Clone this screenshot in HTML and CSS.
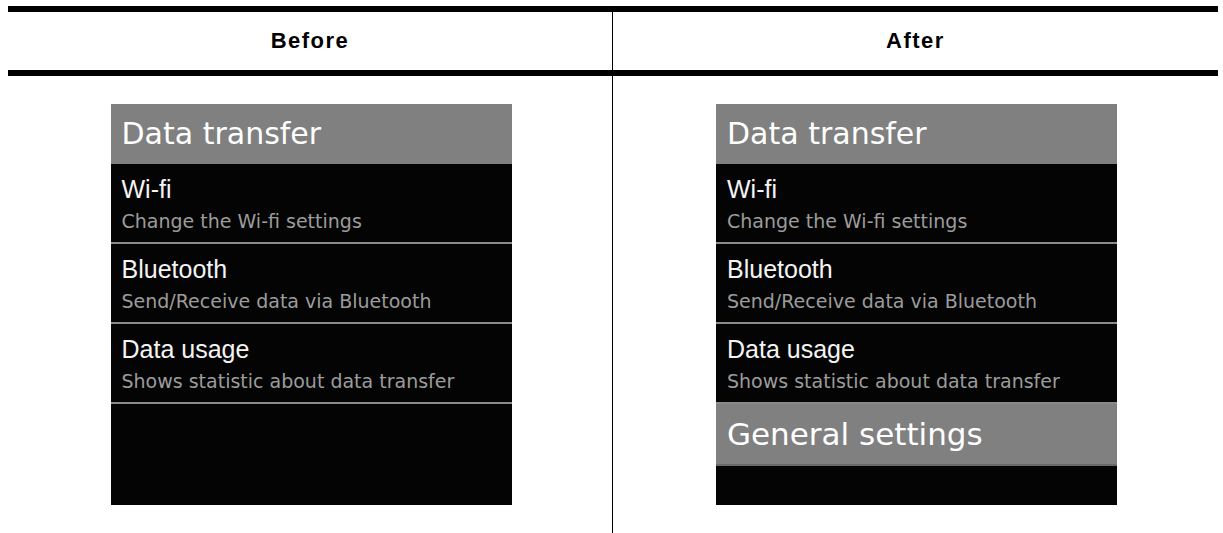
FILE: index.html
```html
<!DOCTYPE html>
<html>
<head>
<meta charset="utf-8">
<link rel="stylesheet" href="styles.css">
</head>
<body>
<div class="table">
  <div class="head">
    <div class="hcell left">Before</div>
    <div class="hcell">After</div>
  </div>
  <div class="body">
    <div class="cell left">
      <div class="panel">
        <div class="ptitle">Data transfer</div>
        <div class="item">
          <div class="ititle">Wi-fi</div>
          <div class="isub">Change the Wi-fi settings</div>
        </div>
        <div class="item">
          <div class="ititle">Bluetooth</div>
          <div class="isub">Send/Receive data via Bluetooth</div>
        </div>
        <div class="item">
          <div class="ititle">Data usage</div>
          <div class="isub">Shows statistic about data transfer</div>
        </div>
      </div>
    </div>
    <div class="cell">
      <div class="panel">
        <div class="ptitle">Data transfer</div>
        <div class="item">
          <div class="ititle">Wi-fi</div>
          <div class="isub">Change the Wi-fi settings</div>
        </div>
        <div class="item">
          <div class="ititle">Bluetooth</div>
          <div class="isub">Send/Receive data via Bluetooth</div>
        </div>
        <div class="item">
          <div class="ititle">Data usage</div>
          <div class="isub">Shows statistic about data transfer</div>
        </div>
        <div class="ptitle general">General settings</div>
      </div>
    </div>
  </div>
</div>
</body>
</html>
```
FILE: styles.css
```css
html, body {
  margin: 0;
  padding: 0;
  background: #fff;
}
body {
  padding: 6px 0 0 8px;
  overflow: hidden;
}
.table {
  width: 1210px;
  border-top: 6px solid #000;
}
.head {
  display: grid;
  grid-template-columns: 605px 605px;
  border-bottom: 6px solid #000;
}
.hcell {
  height: 58px;
  display: flex;
  align-items: center;
  justify-content: center;
  font-family: "Liberation Sans", Arial, sans-serif;
  font-weight: bold;
  font-size: 22px;
  letter-spacing: 1.5px;
  color: #000;
}
.left {
  border-right: 1px solid #000;
}
.body {
  display: grid;
  grid-template-columns: 605px 605px;
}
.cell {
  padding: 28px 0;
  display: flex;
  justify-content: center;
}
.panel {
  margin-left: 2px;
  width: 401px;
  height: 401px;
  background: #040404;
}
.ptitle {
  height: 60px;
  line-height: 60px;
  padding-left: 11px;
  background: #808080;
  color: #fff;
  font-family: "DejaVu Sans", sans-serif;
  font-size: 30px;
  white-space: nowrap;
}
.ptitle.general {
  font-size: 31px;
  border-bottom: 2px solid #6a6a6a;
}
.item {
  height: 78px;
  border-bottom: 2px solid #8a8a8a;
  padding-left: 11px;
}
.ititle {
  padding-top: 10px;
  height: 30px;
  line-height: 30px;
  font-family: "Liberation Sans", Arial, sans-serif;
  font-size: 25px;
  color: #f4f4f4;
  white-space: nowrap;
}
.isub {
  margin-top: 6px;
  height: 22px;
  line-height: 22px;
  font-family: "DejaVu Sans", sans-serif;
  font-size: 19px;
  color: #9c9c9c;
  white-space: nowrap;
}
```
